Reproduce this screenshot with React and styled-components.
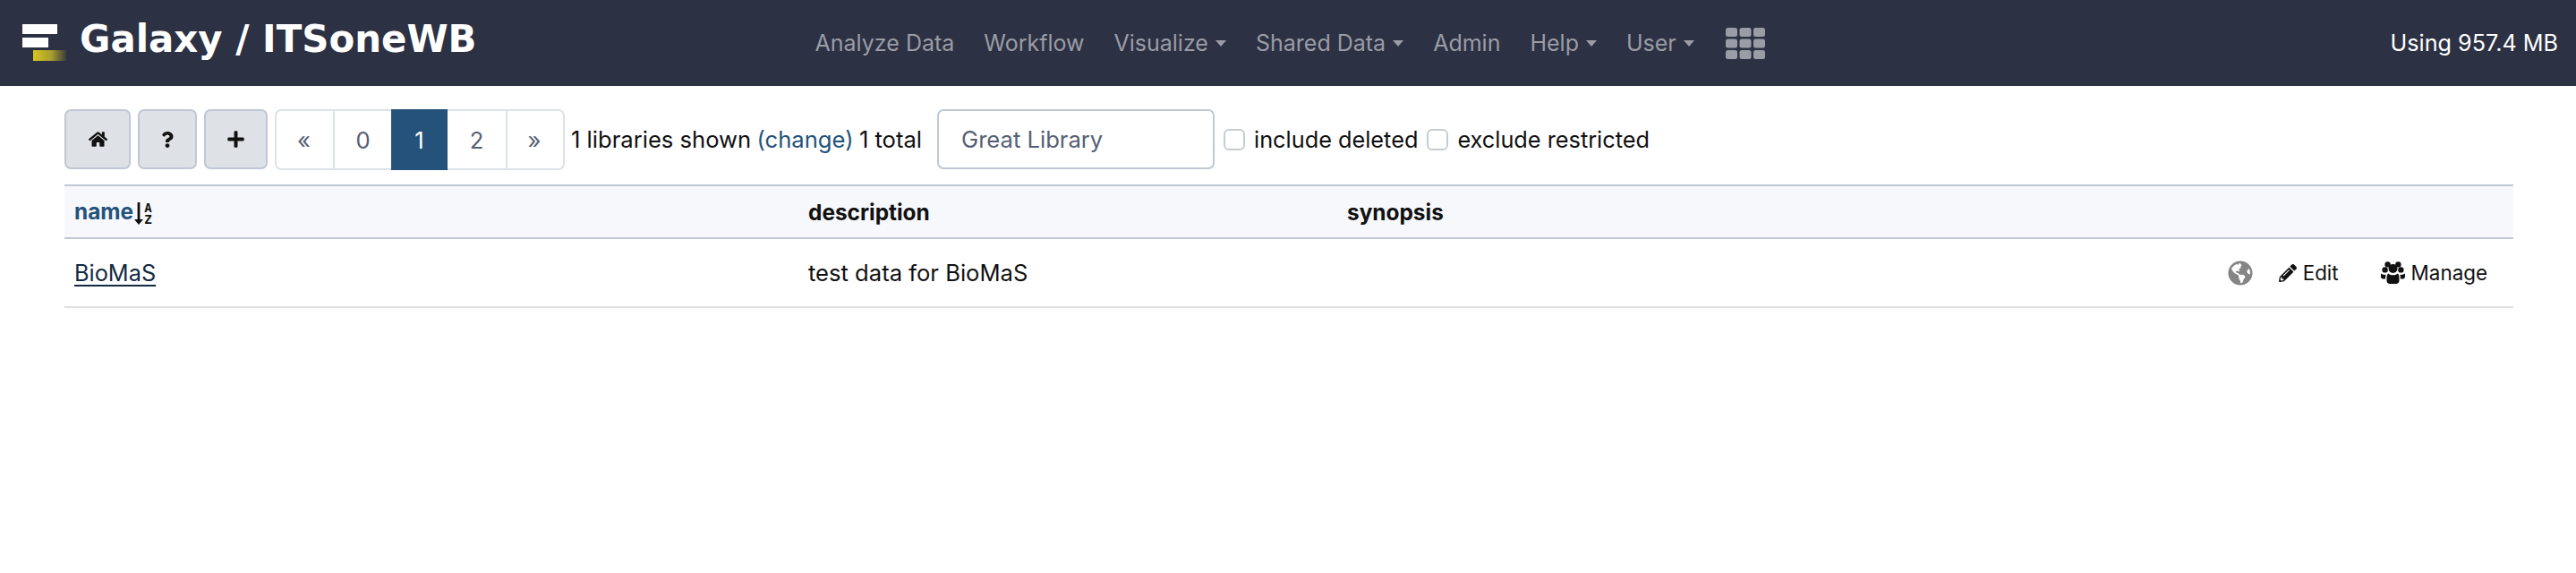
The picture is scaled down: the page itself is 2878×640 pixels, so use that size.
import React from "react";
import styled, { createGlobalStyle } from "styled-components";
import { FaHome, FaQuestion, FaPlus, FaGlobeAmericas, FaPencilAlt } from "react-icons/fa";

const Global = createGlobalStyle`
  html, body { margin: 0; padding: 0; background: #fff; }
  body { font-family: Inter, "Liberation Sans", sans-serif; font-size: 25.6px; color: #111; }
`;

const NavBar = styled.header`
  height: 96px;
  background: #2c3143;
  display: flex;
  align-items: flex-start;
`;
const Brand = styled.a`
  display: flex;
  align-items: center;
  height: 86px;
  padding-left: 24px;
  gap: 14px;
  color: #fff;
  font: bold 41.9px "DejaVu Sans", sans-serif;
  white-space: nowrap;
`;
const NavList = styled.nav`
  display: flex;
  align-items: center;
  height: 96px;
  gap: 33px;
  margin-left: 378px;
  color: #9a9ca6;
  font-size: 25px;
`;
const NavItem = styled.span`
  display: flex;
  align-items: center;
  gap: 8px;
  white-space: nowrap;
`;
const AppsItem = styled(NavItem)`
  margin-left: 2px;
`;
const Caret = styled.i`
  width: 0;
  height: 0;
  border-left: 6.5px solid transparent;
  border-right: 6.5px solid transparent;
  border-top: 7px solid currentColor;
`;
const Usage = styled.div`
  margin-left: auto;
  padding-right: 20px;
  height: 96px;
  display: flex;
  align-items: center;
  color: #fff;
  font-size: 25.2px;
`;
const Toolbar = styled.div`
  display: flex;
  align-items: flex-start;
  margin: 26px 70px 0 72px;
  white-space: nowrap;
`;
const ToolButton = styled.button`
  width: ${(p) => p.$w}px;
  height: 67px;
  margin-right: 8px;
  box-sizing: border-box;
  display: flex;
  align-items: center;
  justify-content: center;
  background: #dee1e6;
  border: 2px solid #bfc8d4;
  border-radius: 7px;
  color: #111;
  padding: 0;
`;
const Pager = styled.div`
  display: flex;
  height: 68px;
  box-sizing: border-box;
  border: 2px solid #dde1e8;
  border-radius: 7px;
  margin-right: 7px;
`;
const PageCell = styled.span`
  width: ${(p) => p.$w}px;
  box-sizing: border-box;
  display: flex;
  align-items: center;
  justify-content: center;
  color: ${(p) => (p.$active ? "#fff" : "#556074")};
  background: ${(p) => (p.$active ? "#25527b" : "transparent")};
  margin: ${(p) => (p.$active ? "-2px 0" : "0")};
  padding-right: ${(p) => (p.$arrow ? "2px" : "0")};
  border-left: ${(p) => (p.$first || p.$active ? "none" : "2px solid #dde1e8")};
`;
const Info = styled.span`
  height: 67px;
  display: flex;
  align-items: center;
  gap: 0.25em;
  margin-right: 17px;
`;
const Change = styled.a`
  color: #25527b;
`;
const Search = styled.div`
  width: 310px;
  height: 67px;
  box-sizing: border-box;
  border: 2px solid #bfc8d4;
  border-radius: 7px;
  padding-left: 25px;
  display: flex;
  align-items: center;
  color: #556074;
  margin-right: 10px;
`;
const Check = styled.label`
  height: 67px;
  display: flex;
  align-items: center;
  gap: 10px;
  margin-right: 10px;
  font-size: 25.3px;
`;
const Box = styled.span`
  width: 24px;
  height: 24px;
  box-sizing: border-box;
  border: 2px solid #c6ccd4;
  border-radius: 6px;
  background: #fff;
`;
const Table = styled.table`
  width: 2736px;
  margin: 16px 0 0 72px;
  border-collapse: collapse;
  table-layout: fixed;
`;
const Head = styled.th`
  height: 57px;
  padding: 0 0 0 11px;
  text-align: left;
  font-weight: 700;
  font-size: 24.4px;
  background: #f6f8fb;
  border-top: 2px solid #bfc8d4;
  border-bottom: 2px solid #bfc8d4;
  color: ${(p) => p.$color || "#111"};
`;
const Cell = styled.td`
  height: 75px;
  padding: 0 0 0 11px;
  border-bottom: 2px solid #dee0e3;
`;
const NameLink = styled.a`
  color: #122a43;
  text-decoration: underline;
  text-underline-offset: 4px;
  font-size: 25.3px;
`;
const SortMark = styled.span`
  display: inline-flex;
  align-items: center;
  gap: 1px;
  margin-left: 1px;
  vertical-align: middle;
  color: #111;
`;
const SortLetters = styled.span`
  display: flex;
  flex-direction: column;
  font: bold 14px/13px "DejaVu Sans Mono", monospace;
`;
const Actions = styled.div`
  display: flex;
  align-items: center;
  justify-content: flex-end;
  padding-right: 29px;
`;
const Action = styled.span`
  display: flex;
  align-items: center;
  gap: 7px;
  font-size: 22.4px;
  margin-left: ${(p) => p.$ml}px;
`;
const Globe = styled(FaGlobeAmericas)`
  color: #858585;
  font-size: 28px;
`;

function Logo() {
  return (
    <svg width="51" height="42" viewBox="0 0 51 42" style={{ flex: "none", marginTop: 8, filter: "blur(0.7px)" }}>
      <defs>
        <linearGradient id="y" x1="0" x2="1">
          <stop offset="0" stopColor="#d8c61f" />
          <stop offset="0.55" stopColor="#a89d2e" />
          <stop offset="1" stopColor="#3a3d3e" />
        </linearGradient>
      </defs>
      <rect x="1" y="1" width="39" height="11" fill="#fff" />
      <rect x="1" y="16" width="29" height="11" fill="#fff" />
      <rect x="13" y="30" width="37" height="12" fill="url(#y)" />
    </svg>
  );
}

function AppsGrid() {
  const cells = [];
  for (let r = 0; r < 3; r++) {
    for (let c = 0; c < 3; c++) {
      cells.push(<rect key={`${r}-${c}`} x={c * 15.5} y={r * 12.5} width="13" height="10" rx="2.5" fill="currentColor" />);
    }
  }
  return (
    <svg width="44" height="35" viewBox="0 0 44 35">
      {cells}
    </svg>
  );
}

function SortAlpha() {
  return (
    <SortMark>
      <svg width="10" height="25" viewBox="0 0 10 25">
        <path d="M3.6 0h2.8v19H10l-5 6-5-6h3.6z" fill="currentColor" />
      </svg>
      <SortLetters>
        <span>A</span>
        <span>Z</span>
      </SortLetters>
    </SortMark>
  );
}

function GroupIcon() {
  return (
    <svg width="27" height="25" viewBox="0 0 27 25" fill="currentColor">
      <circle cx="4.6" cy="9.4" r="3.2" />
      <circle cx="22.4" cy="9.4" r="3.2" />
      <circle cx="7.6" cy="3.4" r="3.2" />
      <circle cx="19.4" cy="3.4" r="3.2" />
      <circle cx="13.5" cy="8" r="5" />
      <path d="M0 13.6c1.5 1.2 3.6 1.5 5.6 1.2-.3 1.4-.5 3-.5 4.6H2.4C1 19.4 0 18.4 0 17zM27 13.6c-1.5 1.2-3.6 1.5-5.6 1.2.3 1.4.5 3 .5 4.6h2.7c1.4 0 2.4-1 2.4-2.4z" />
      <path d="M8.2 13.4c1.4 1.2 3.3 1.9 5.3 1.9s3.900-.7 5.300-1.900c1.200.8 1.700 3 1.700 6.200v2c0 2-1.500 3.400-3.500 3.400H10c-2 0-3.500-1.400-3.500-3.400v-2c0-3.200.5-5.400 1.700-6.200z" />
    </svg>
  );
}

export default function App() {
  return (
    <>
      <Global />
      <NavBar>
        <Brand>
          <Logo />
          Galaxy / ITSoneWB
        </Brand>
        <NavList>
          <NavItem>Analyze Data</NavItem>
          <NavItem>Workflow</NavItem>
          <NavItem>Visualize<Caret /></NavItem>
          <NavItem>Shared Data<Caret /></NavItem>
          <NavItem>Admin</NavItem>
          <NavItem>Help<Caret /></NavItem>
          <NavItem>User<Caret /></NavItem>
          <AppsItem><AppsGrid /></AppsItem>
        </NavList>
        <Usage>Using 957.4 MB</Usage>
      </NavBar>
      <Toolbar>
        <ToolButton $w={74}><FaHome size={21} /></ToolButton>
        <ToolButton $w={66}><FaQuestion size={18} /></ToolButton>
        <ToolButton $w={71}><FaPlus size={21} /></ToolButton>
        <Pager>
          <PageCell $w={63} $first $arrow>«</PageCell>
          <PageCell $w={65}>0</PageCell>
          <PageCell $w={63} $active>1</PageCell>
          <PageCell $w={65} $first>2</PageCell>
          <PageCell $w={64} $arrow>»</PageCell>
        </Pager>
        <Info>1 libraries shown <Change>(change)</Change> 1 total</Info>
        <Search>Great Library</Search>
        <Check><Box />include deleted</Check>
        <Check><Box />exclude restricted</Check>
      </Toolbar>
      <Table>
        <colgroup>
          <col style={{ width: 820 }} />
          <col style={{ width: 602 }} />
          <col style={{ width: 600 }} />
          <col />
        </colgroup>
        <thead>
          <tr>
            <Head $color="#25527b">name<SortAlpha /></Head>
            <Head>description</Head>
            <Head>synopsis</Head>
            <Head />
          </tr>
        </thead>
        <tbody>
          <tr>
            <Cell><NameLink>BioMaS</NameLink></Cell>
            <Cell>test data for BioMaS</Cell>
            <Cell />
            <Cell>
              <Actions>
                <Globe />
                <Action $ml={29}><FaPencilAlt size={20} />Edit</Action>
                <Action $ml={47}><GroupIcon />Manage</Action>
              </Actions>
            </Cell>
          </tr>
        </tbody>
      </Table>
    </>
  );
}
